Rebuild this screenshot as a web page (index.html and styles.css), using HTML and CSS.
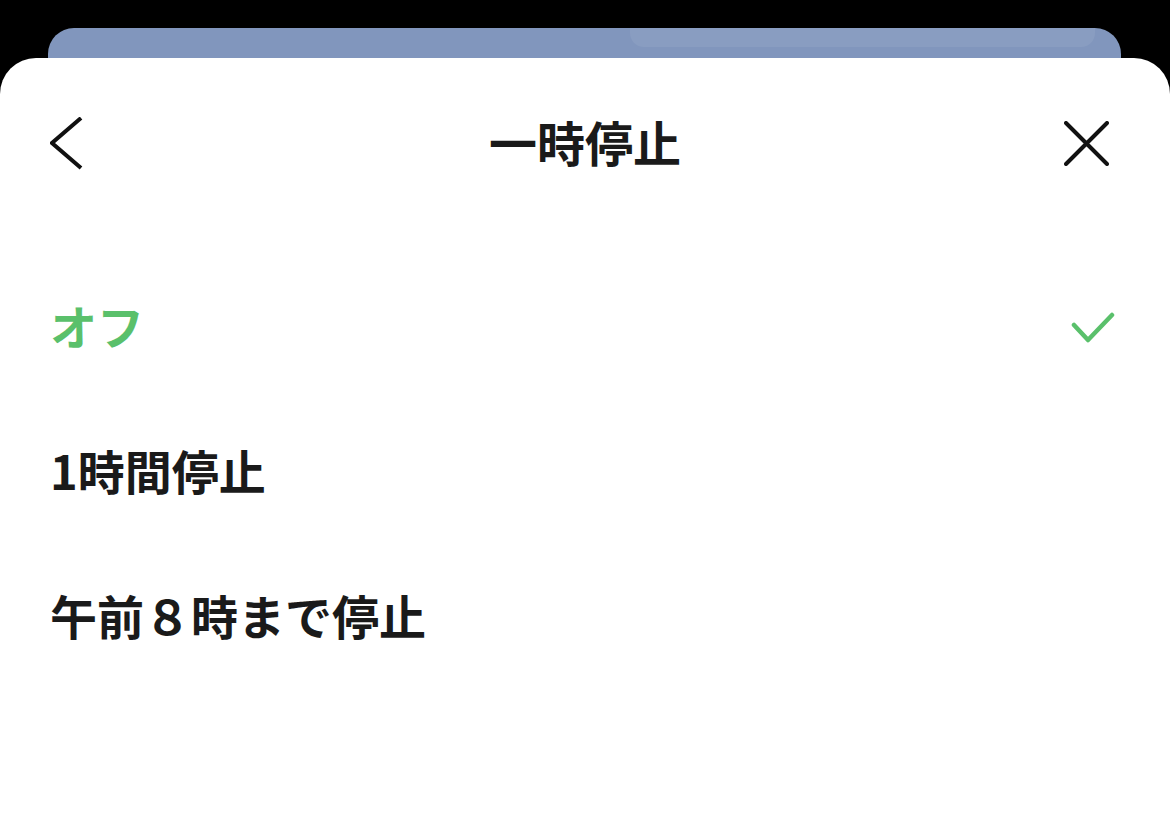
FILE: index.html
```html
<!DOCTYPE html>
<html lang="ja">

<head>
    <meta charset="UTF-8">
    <meta name="viewport" content="width=device-width, initial-scale=1.0">
    <title>一時停止</title>
    <link rel="stylesheet" href="styles.css">
</head>

<body>
    <div class="card-behind">
        <div class="card-tab"></div>
    </div>

    <div class="sheet">
        <div class="header">
            <span class="btn-back">
                <svg width="36" height="56" viewBox="0 0 36 56">
                    <path d="M31 1 L2 26 L31 51" fill="none" stroke="#111" stroke-width="4" stroke-linecap="butt" />
                </svg>
            </span>
            <h1 class="title">一時停止</h1>
            <span class="btn-close">
                <svg width="45" height="45" viewBox="0 0 45 45">
                    <path d="M2 2 L43 43 M43 2 L2 43" fill="none" stroke="#111" stroke-width="4" stroke-linecap="round" />
                </svg>
            </span>
        </div>

        <ul class="options">
            <li class="active">
                <span>オフ</span>
                <svg class="check" width="44" height="34" viewBox="0 0 44 34">
                    <path d="M3 13 L17 28 L41 3" fill="none" stroke="#5ac06b" stroke-width="4.5" stroke-linecap="round" stroke-linejoin="round" />
                </svg>
            </li>
            <li><span>1時間停止</span></li>
            <li><span>午前８時まで停止</span></li>
        </ul>
    </div>
</body>

</html>
```

FILE: styles.css
```css
* {
    margin: 0;
    padding: 0;
}

html,
body {
    background-color: #000;
    height: 100%;
    overflow: hidden;
}

body {
    font-family: "Noto Sans CJK JP", "Noto Sans", sans-serif;
    color: #1a1a1a;
}

li {
    list-style: none;
}

.card-behind {
    height: 30px;
    margin: 28px 49px 0 48px;
    background-color: #8196bd;
    border-radius: 26px 26px 0 0;
    display: flex;
    justify-content: flex-end;
}

.card-tab {
    width: 465px;
    height: 19px;
    margin-right: 26px;
    background-color: #899dc1;
    border-radius: 0 0 14px 14px;
}

.sheet {
    height: 761px;
    background-color: #fff;
    border-radius: 36px 36px 0 0;
}

.header {
    height: 166px;
    padding: 0 50px 8px;
    display: grid;
    grid-template-columns: 1fr auto 1fr;
    align-items: center;
}

.btn-back svg,
.btn-close svg {
    display: block;
}

.btn-back {
    margin-top: 8px;
}

.btn-close {
    justify-self: end;
    margin: 4px 11px 0 0;
}

.title {
    font-size: 48px;
    font-weight: 700;
    line-height: 1;
}

.options {
    margin-top: 20px;
}

.options li {
    height: 145px;
    padding: 0 55px 0 50px;
    display: flex;
    align-items: center;
    justify-content: space-between;
    font-size: 47px;
    font-weight: 700;
    line-height: 1;
}

.options .check {
    margin-top: 8px;
}

.options .active {
    color: #5ac06b;
}
```
